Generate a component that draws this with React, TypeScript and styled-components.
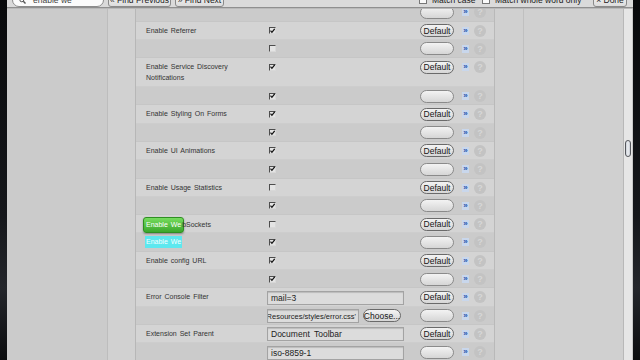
import React from 'react';
import styled, { createGlobalStyle } from 'styled-components';

const GlobalStyle = createGlobalStyle`
  html, body {
    margin: 0;
    padding: 0;
    background: #0e0f12;
    overflow: hidden;
  }
  body {
    font-family: 'Liberation Sans', Arial, sans-serif;
  }
`;

type Control =
    | { kind: 'none' }
    | { kind: 'check'; on: boolean }
    | { kind: 'text'; value: string }
    | { kind: 'file'; value: string };

interface Setting {
    label: React.ReactNode;
    hidden?: React.ReactNode;
    current: Control;
    initial: Control;
}

const Screen = styled.div`
  display: flex;
  width: 640px;
  height: 360px;
  overflow: hidden;
`;

const Edge = styled.div<{ $w: number }>`
  flex: none;
  width: ${(p) => p.$w}px;
  background: linear-gradient(180deg, #08090b 0%, #15171b 60%, #24262b 80%, #0b0c0e 100%);
`;

const Window = styled.div`
  flex: none;
  width: 626px;
  min-width: 0;
  display: flex;
  flex-direction: column;
  overflow: hidden;
  background: #cfcfcf;
`;

/* find bar, mostly scrolled off the top of the picture */
const FindBar = styled.div`
  flex: none;
  height: 7px;
  display: flex;
  align-items: flex-end;
  overflow: hidden;
  padding: 0 6px 0 5px;
  background: #dadada;
  border-bottom: 1px solid #8f8f8f;
  box-shadow: 0 1px 0 #b9b9b9;
  font-size: 8.5px;
  color: #222;
  white-space: nowrap;
`;

const SearchField = styled.div`
  flex: none;
  width: 92px;
  height: 14px;
  box-sizing: border-box;
  display: flex;
  align-items: center;
  gap: 7px;
  padding-left: 6px;
  background: #fbfbfb;
  border: 1px solid #8c8c8c;
  border-radius: 8px;
  color: #444;
`;

const BarButton = styled.div<{ $w: number }>`
  flex: none;
  width: ${(p) => p.$w}px;
  height: 14px;
  margin-left: 4px;
  box-sizing: border-box;
  display: flex;
  align-items: center;
  justify-content: center;
  background: linear-gradient(#f6f6f6, #dcdcdc);
  border: 1px solid #8a8a8a;
  border-radius: 3px;
`;

const Spacer = styled.div`
  flex: 1;
`;

const Option = styled.div<{ $w: number }>`
  flex: none;
  width: ${(p) => p.$w}px;
  height: 14px;
  display: flex;
  align-items: center;
  gap: 5px;
`;

const SmallBox = styled.span`
  width: 8px;
  height: 8px;
  box-sizing: border-box;
  background: #fafafa;
  border: 1px solid #777;
`;

const Body = styled.div`
  flex: 1;
  display: flex;
  min-height: 0;
  margin-top: 1px;
`;

const Sidebar = styled.div`
  flex: none;
  width: 100px;
  background: #cbcbcb;
  border-right: 1px solid #bdbdbd;
`;

const Gutter = styled.div`
  flex: none;
  width: 27px;
  background: #d1d1d1;
  border-right: 1px solid #b7b7b7;
`;

const Table = styled.div`
  flex: none;
  width: 358px;
  overflow: hidden;
  background: #d0d0d0;
  border-right: 1px solid #b9b9b9;
`;

const Rows = styled.div`
  margin-top: -5.8px;
`;

const Row = styled.div<{ $alt: boolean }>`
  display: grid;
  grid-template-columns: 131px 150px 42px 14px 20px;
  align-items: start;
  background: ${(p) => (p.$alt ? '#cbcbcb' : '#d4d4d4')};
  border-bottom: 1px solid ${(p) => (p.$alt ? '#c6c6c6' : '#cdcdcd')};
`;

const Label = styled.div`
  padding: 3px 0 3.3px 10px;
  height: 11px;
  font-size: 7px;
  line-height: 11px;
  word-spacing: 1px;
  color: #333;
  white-space: nowrap;
`;

const TallLabel = styled(Label)`
  height: 22px;
  padding-bottom: 3px;
  white-space: pre-line;
`;

const GreenMatch = styled.span`
  display: inline-block;
  padding: 1.5px 2px;
  margin: -1.5px -2px -1.5px -3px;
  border-radius: 3px;
  background: linear-gradient(#76dc5e, #3ba72c);
  border: 1px solid #2f8f22;
  color: #fff;
  box-shadow: 0 1px 2px rgba(0, 0, 0, 0.35);
`;

const CyanMatch = styled.span`
  display: inline-block;
  padding: 0.5px 1px;
  margin: -0.5px -1px;
  background: #5de8ef;
  color: #f4ffff;
`;

const Value = styled.div`
  display: flex;
  align-items: flex-start;
  gap: 4px;
  padding-top: 2.5px;
`;

const Check = styled.span`
  width: 7px;
  height: 7px;
  margin: 3px 0 0 2px;
  box-sizing: border-box;
  display: flex;
  align-items: center;
  justify-content: center;
  background: #e4e4e4;
  border-top: 1px solid #4d4d4d;
  border-left: 1px solid #4d4d4d;
  border-right: 1px solid #d8d8d8;
  border-bottom: 1px solid #d8d8d8;
`;

const Field = styled.div<{ $w: number }>`
  width: ${(p) => p.$w}px;
  height: 14px;
  box-sizing: border-box;
  display: flex;
  align-items: center;
  overflow: hidden;
  padding: 0 3px;
  background: #dcdcdc;
  border: 1px solid #a3a3a3;
  box-shadow: inset 0 1px 1px rgba(0, 0, 0, 0.15);
  font-size: 8.5px;
  word-spacing: 2px;
  color: #222;
  white-space: nowrap;
`;

const FileField = styled(Field)`
  justify-content: flex-end;
  padding: 0 2px;
  font-size: 7.5px;
  word-spacing: 0;
`;

const Pill = styled.div<{ $w: number; $empty?: boolean }>`
  width: ${(p) => p.$w}px;
  height: 13px;
  box-sizing: border-box;
  display: flex;
  align-items: center;
  justify-content: center;
  border-radius: 7px;
  border: 1.5px solid ${(p) => (p.$empty ? '#8a8a8a' : '#6a6a6a')};
  background: linear-gradient(#f3f3f3, #d6d6d6);
  font-size: 8.5px;
  color: #151515;
  white-space: nowrap;
`;

const DefaultCell = styled.div`
  padding: 2.5px 0 0 3px;
`;

const ArrowCell = styled.div`
  padding: 5px 0 0 3px;
`;

const Arrow = styled.span`
  display: flex;
  align-items: center;
  justify-content: center;
  width: 7px;
  height: 8px;
  background: #c9d7ec;
  color: #2456b0;
  font-size: 8px;
  font-weight: bold;
  line-height: 8px;
`;

const HelpCell = styled.div`
  padding: 3px 0 0 1px;
`;

const Help = styled.span`
  display: flex;
  align-items: center;
  justify-content: center;
  width: 12px;
  height: 12px;
  border-radius: 50%;
  background: #c3c3c3;
  color: #d7d7d7;
  font-size: 9px;
  font-weight: bold;
`;

const RightPane = styled.div`
  flex: 1;
  display: flex;
  background: #d0d0d0;
`;

const PaneLine = styled.div`
  flex: none;
  width: 28px;
  border-right: 1px solid #c0c0c0;
`;

const ScrollTrack = styled.div`
  flex: none;
  width: 10px;
  box-sizing: border-box;
  padding: 131px 1px 0 1px;
  background: #e6e6e6;
  border-left: 1px solid #b8b8b8;
  border-right: 1px solid #c8c8c8;
`;

const Thumb = styled.div`
  height: 17px;
  box-sizing: border-box;
  border: 1.5px solid #55575c;
  border-radius: 3px;
  background: linear-gradient(90deg, #c9ced6, #eef0f3 50%, #c5cad2);
`;

const Tick = () => (
    <svg width="6" height="6" viewBox="0 0 6 6">
        <path d="M0.6 2.6 L2.3 4.6 L5.6 0.4" stroke="#111" strokeWidth="1.5" fill="none" />
    </svg>
);

const Magnifier = () => (
    <svg width="7" height="7" viewBox="0 0 7 7">
        <circle cx="2.8" cy="2.8" r="2" stroke="#555" strokeWidth="1" fill="none" />
        <path d="M4.3 4.3 L6.5 6.5" stroke="#555" strokeWidth="1.4" />
    </svg>
);

const settings: Setting[] = [
    { label: '', current: { kind: 'none' }, initial: { kind: 'none' } },
    { label: 'Enable Referrer', current: { kind: 'check', on: true }, initial: { kind: 'check', on: false } },
    {
        label: 'Enable Service Discovery\nNotifications',
        current: { kind: 'check', on: true },
        initial: { kind: 'check', on: true },
    },
    { label: 'Enable Styling On Forms', current: { kind: 'check', on: true }, initial: { kind: 'check', on: true } },
    { label: 'Enable UI Animations', current: { kind: 'check', on: true }, initial: { kind: 'check', on: true } },
    { label: 'Enable Usage Statistics', current: { kind: 'check', on: false }, initial: { kind: 'check', on: true } },
    {
        label: (
            <>
                <GreenMatch>Enable We</GreenMatch>bSockets
            </>
        ),
        hidden: <CyanMatch>Enable We</CyanMatch>,
        current: { kind: 'check', on: false },
        initial: { kind: 'check', on: true },
    },
    { label: 'Enable config URL', current: { kind: 'check', on: true }, initial: { kind: 'check', on: true } },
    {
        label: 'Error Console Filter',
        current: { kind: 'text', value: 'mail=3' },
        initial: { kind: 'file', value: "'Resources/styles/error.css'" },
    },
    {
        label: 'Extension Set Parent',
        current: { kind: 'text', value: 'Document Toolbar' },
        initial: { kind: 'text', value: 'iso-8859-1' },
    },
];

const ControlView: React.FC<{ control: Control }> = ({ control }) => {
    switch (control.kind) {
        case 'check':
            return <Check>{control.on && <Tick />}</Check>;
        case 'text':
            return <Field $w={137}>{control.value}</Field>;
        case 'file':
            return (
                <>
                    <FileField $w={92}>{control.value}</FileField>
                    <Pill $w={38}>Choose...</Pill>
                </>
            );
        default:
            return null;
    }
};

const Tail = () => (
    <>
        <ArrowCell>
            <Arrow>»</Arrow>
        </ArrowCell>
        <HelpCell>
            <Help>?</Help>
        </HelpCell>
    </>
);

const SettingRows: React.FC<{ setting: Setting; first?: boolean }> = ({ setting, first }) => {
    const tall = typeof setting.label === 'string' && setting.label.includes('\n');
    const Name = tall ? TallLabel : Label;
    return (
        <>
            {!first && (
                <Row $alt={false}>
                    <Name>{setting.label}</Name>
                    <Value>
                        <ControlView control={setting.current} />
                    </Value>
                    <DefaultCell>
                        <Pill $w={34}>Default</Pill>
                    </DefaultCell>
                    <Tail />
                </Row>
            )}
            <Row $alt>
                <Label>{setting.hidden ?? ''}</Label>
                <Value>
                    <ControlView control={setting.initial} />
                </Value>
                <DefaultCell>
                    <Pill $w={34} $empty />
                </DefaultCell>
                <Tail />
            </Row>
        </>
    );
};

export default function App() {
    return (
        <>
            <GlobalStyle />
            <Screen>
                <Edge $w={7} />
                <Window>
                    <FindBar>
                        <SearchField>
                            <Magnifier />
                            enable we
                        </SearchField>
                        <BarButton $w={63}>« Find Previous</BarButton>
                        <BarButton $w={49}>» Find Next</BarButton>
                        <Spacer />
                        <Option $w={63}>
                            <SmallBox />
                            Match case
                        </Option>
                        <Option $w={107}>
                            <SmallBox />
                            Match whole word only
                        </Option>
                        <BarButton $w={34}>× Done</BarButton>
                    </FindBar>
                    <Body>
                        <Sidebar />
                        <Gutter />
                        <Table>
                            <Rows>
                                {settings.map((s, i) => (
                                    <SettingRows key={i} setting={s} first={i === 0} />
                                ))}
                            </Rows>
                        </Table>
                        <RightPane>
                            <PaneLine />
                        </RightPane>
                        <ScrollTrack>
                            <Thumb />
                        </ScrollTrack>
                    </Body>
                </Window>
                <Edge $w={7} />
            </Screen>
        </>
    );
}
